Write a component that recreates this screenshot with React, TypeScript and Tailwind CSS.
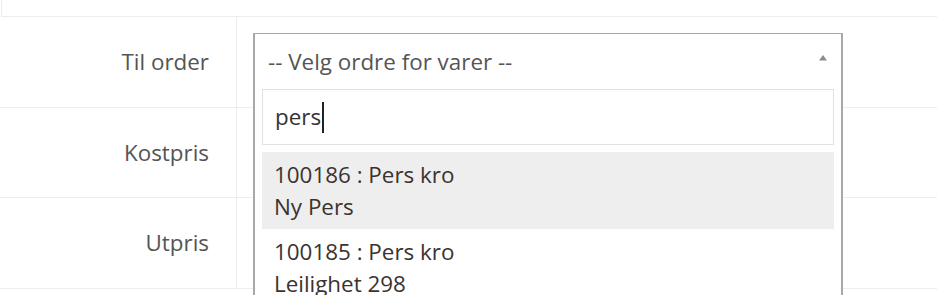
export default function App() {
  const rows = [
    { label: "Til order", h: "h-[91px]" },
    { label: "Kostpris", h: "h-[90px]" },
    { label: "Utpris", h: "h-[91px]" },
  ]

  const results = [
    { id: "100186", name: "Pers kro", sub: "Ny Pers", active: true },
    { id: "100185", name: "Pers kro", sub: "Leilighet 298", active: false },
  ]

  return (
    <div className="relative w-[940px] h-[295px] overflow-hidden bg-white font-['Open_Sans',sans-serif] text-[22.4px]">
      <div className="ml-px w-[936px] h-[17px] border-l border-b border-[#ededed]" />

      {rows.map((row) => (
        <div key={row.label} className={`flex w-[937px] border-b border-[#ededed] ${row.h}`}>
          <div className="w-[237px] border-r border-[#ededed] flex items-center justify-end pr-[27px] text-[#555]">
            {row.label}
          </div>
          <div className="flex-1" />
        </div>
      ))}

      <div className="absolute left-[253px] top-[33px] w-[590px] h-[280px] bg-white border-x-2 border-t border-[#a8a8a8]">
        <div className="relative h-[55px] flex items-center pl-[13px] text-[#555]">
          -- Velg ordre for varer --
          <svg className="absolute right-[13px] top-[20px]" width="10" height="7" viewBox="0 0 10 7">
            <path d="M1 6.5 L5 1 L9 6.5 Z" fill="#8c8c8c" />
          </svg>
        </div>

        <div className="px-[7px]">
          <div className="h-[56px] border border-[#e2e2e2] flex items-center pl-[12px] text-[#333]">
            pers
            <span className="inline-block w-[1.5px] h-[31px] bg-[#222] ml-px" />
          </div>

          <div className="mt-[7px]">
            {results.map((r) => (
              <div
                key={r.id}
                className={`px-[12px] py-[6.5px] leading-[32px] text-[#3a3330] ${r.active ? "bg-[#eeeeee]" : ""}`}
              >
                <div>
                  {r.id} : {r.name}
                </div>
                <div>{r.sub}</div>
              </div>
            ))}
          </div>
        </div>
      </div>
    </div>
  )
}
